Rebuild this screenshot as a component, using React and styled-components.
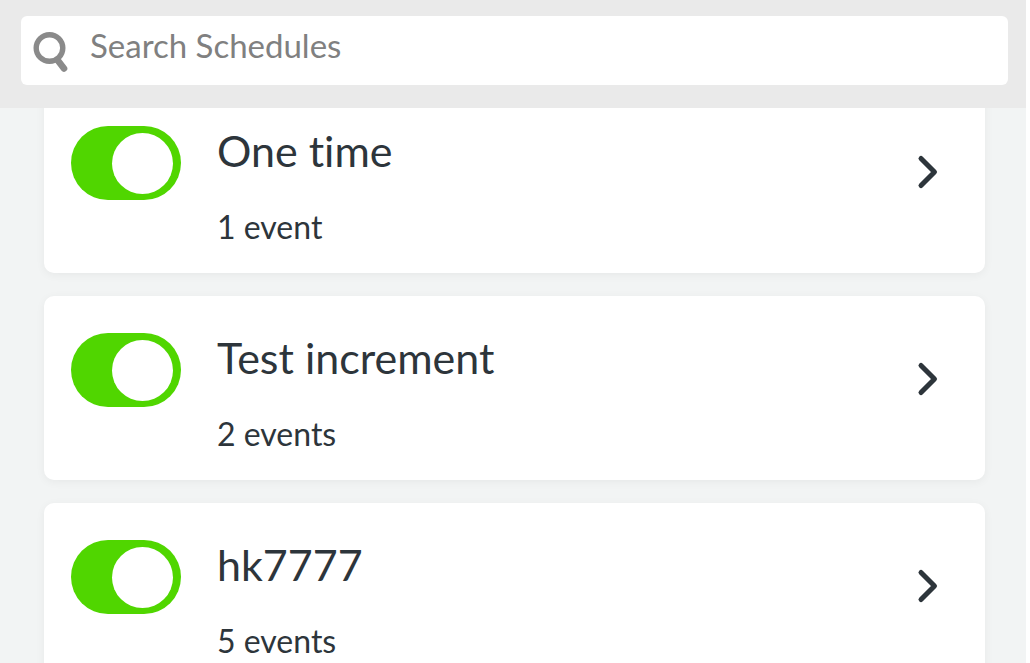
import { useState } from "react";
import styled, { createGlobalStyle } from "styled-components";

const Colors = {
  page: "#f2f4f4",
  header: "#eaeaea",
  text: "#2d353b",
  placeholder: "#808080",
  icon: "#8a8a8a",
  on: "#50d600",
  off: "#c8cccc",
};

const SCHEDULES = [
  { id: "one-time", name: "One time", events: 1 },
  { id: "test-increment", name: "Test increment", events: 2 },
  { id: "hk7777", name: "hk7777", events: 5 },
];

const GlobalStyle = createGlobalStyle`
  * {
    box-sizing: border-box;
  }

  body {
    margin: 0;
    background-color: white;
    color: ${Colors.text};
    font-family: Lato, "Open Sans", sans-serif;
    font-weight: 400;
    font-variant-ligatures: none;
  }
`;

/* SearchBar */

const StyledSearchBar = styled.label`
  display: flex;
  align-items: center;
  gap: 20px;
  height: 69px;
  padding: 0 12px;
  border-radius: 6px;
  background-color: white;

  svg {
    flex: none;
  }
`;

const SearchInput = styled.input`
  flex: 1;
  min-width: 0;
  padding: 0 0 12px;
  border: 0;
  outline: 0;
  background: none;
  color: ${Colors.text};
  font-family: inherit;
  font-size: 33px;
  line-height: 44px;

  &::placeholder {
    color: ${Colors.placeholder};
    opacity: 1;
  }
`;

function SearchBar({ value, onChange }) {
  return (
    <StyledSearchBar>
      <svg width="37" height="44" viewBox="0 0 37 44" fill="none">
        <circle cx="16.5" cy="19" r="13.3" stroke={Colors.icon} strokeWidth="5.4" />
        <path
          d="M24.5 31L31 39.5"
          stroke={Colors.icon}
          strokeWidth="6.6"
          strokeLinecap="round"
        />
      </svg>
      <SearchInput
        type="text"
        placeholder="Search Schedules"
        aria-label="Search Schedules"
        value={value}
        onChange={(e) => onChange(e.target.value)}
      />
    </StyledSearchBar>
  );
}

/* Toggle */

const Toggle = styled.input.attrs({ type: "checkbox", role: "switch" })`
  appearance: none;
  flex: none;
  display: flex;
  align-items: center;
  width: 110px;
  height: 74px;
  margin: 0;
  padding: 0 8px;
  border-radius: 37px;
  background-color: ${Colors.off};
  cursor: pointer;

  &::before {
    content: "";
    width: 61px;
    height: 61px;
    border-radius: 50%;
    background-color: white;
  }

  &:checked {
    justify-content: flex-end;
    background-color: ${Colors.on};
  }
`;

/* ScheduleCard */

const Card = styled.li`
  display: flex;
  align-items: flex-start;
  padding: 37px 40px 26px 27px;
  border-radius: 10px;
  background-color: white;
  box-shadow: 0 2px 10px 0 rgba(0, 0, 0, 0.05);
`;

const CardBody = styled.div`
  flex: 1;
  display: flex;
  align-items: flex-start;
  gap: 36px;
`;

const Info = styled.div`
  display: flex;
  flex-direction: column;
  gap: 31px;
`;

const Name = styled.label`
  font-size: 43px;
  line-height: 50px;
`;

const EventCount = styled.span`
  font-size: 32px;
  line-height: 40px;
`;

const OpenButton = styled.button`
  display: flex;
  padding: 28px 4px 4px;
  border: 0;
  background: none;
  color: inherit;
  cursor: pointer;
`;

function ScheduleCard({ id, name, events }) {
  const [enabled, setEnabled] = useState(true);

  return (
    <Card>
      <CardBody>
        <Toggle
          id={id}
          checked={enabled}
          onChange={(e) => setEnabled(e.target.checked)}
        />
        <Info>
          <Name htmlFor={id}>{name}</Name>
          <EventCount>{`${events} ${events === 1 ? "event" : "events"}`}</EventCount>
        </Info>
      </CardBody>
      <OpenButton type="button" aria-label={`Open ${name}`}>
        <svg width="28" height="36" viewBox="0 0 28 36" fill="none">
          <path
            d="M8 4.5L21.5 18L8 31.5"
            stroke="currentColor"
            strokeWidth="5"
            strokeLinecap="round"
            strokeLinejoin="round"
          />
        </svg>
      </OpenButton>
    </Card>
  );
}

/* Screen */

const Screen = styled.main`
  height: 100vh;
  margin-right: 4px;
  overflow: hidden;
  background-color: ${Colors.page};
`;

const Header = styled.header`
  position: relative;
  z-index: 1;
  padding: 16px 18px 23px 21px;
  background-color: ${Colors.header};
`;

const ScheduleList = styled.ul`
  display: flex;
  flex-direction: column;
  gap: 23px;
  margin: -19px 0 0;
  padding: 0 41px 23px 44px;
  list-style: none;
`;

function App() {
  const [query, setQuery] = useState("");
  const visible = SCHEDULES.filter(({ name }) =>
    name.toLowerCase().includes(query.toLowerCase())
  );

  return (
    <>
      <GlobalStyle />
      <Screen>
        <Header>
          <SearchBar value={query} onChange={setQuery} />
        </Header>
        <ScheduleList>
          {visible.map((schedule) => (
            <ScheduleCard key={schedule.id} {...schedule} />
          ))}
        </ScheduleList>
      </Screen>
    </>
  );
}

export default App;
